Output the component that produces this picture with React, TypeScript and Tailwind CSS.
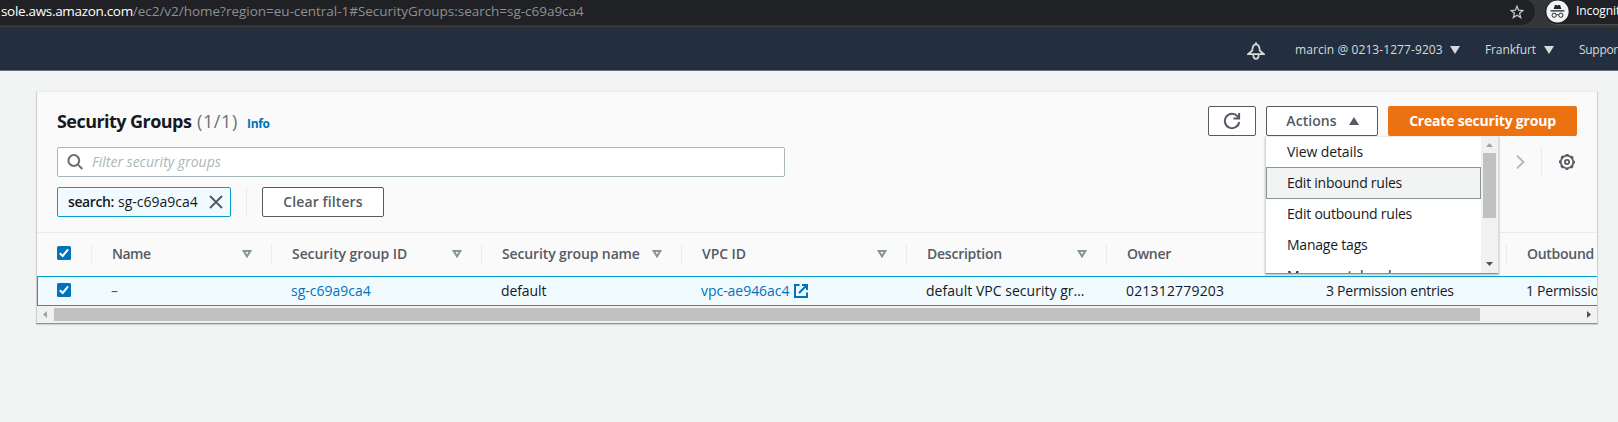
import type { ReactNode } from 'react';

function Triangle({ up = false, className = '' }: { up?: boolean; className?: string }) {
  return (
    <svg viewBox="0 0 10 8" className={`h-2 w-2.5 shrink-0 ${className}`} fill="currentColor">
      <path d={up ? 'M0 8 5 0l5 8z' : 'M0 0h10L5 8z'} />
    </svg>
  );
}

function SortIcon() {
  return (
    <svg viewBox="0 0 10 8" className="mr-[19px] h-2 w-2.5 shrink-0" fill="none" stroke="#879596" strokeWidth="2">
      <path d="M1.6 1h6.8L5 6.4z" />
    </svg>
  );
}

function Checkbox() {
  return (
    <svg viewBox="0 0 14 14" className="size-3.5 shrink-0">
      <rect width="14" height="14" rx="1.5" fill="#0073bb" />
      <path d="M2.8 7.3 5.7 10l5.4-6.7" fill="none" stroke="#fff" strokeWidth="2" />
    </svg>
  );
}

function BrowserBar() {
  return (
    <div className="flex h-[29px] border-b border-[#292b2e] bg-[#35363a] font-['Open_Sans',sans-serif]">
      <div className="flex h-[25px] w-[1535px] items-center rounded-br-[14px] rounded-tr-[10px] bg-[#202124] pb-[2px] pl-px">
        <span className="text-[13.5px] tracking-[-0.32px] text-white">sole.aws.amazon.com</span>
        <span className="text-[13.5px] tracking-[-0.025px] text-[#8d9094]">
          /ec2/v2/home?region=eu-central-1#SecurityGroups:search=sg-c69a9ca4
        </span>
        <svg viewBox="0 0 14 14" className="ml-auto mr-[11px] size-3.5" fill="none" stroke="#c4c7ca" strokeWidth="1.3">
          <path d="m7 1.2 1.6 4 4.3.3-3.3 2.8 1.1 4.2L7 10.2l-3.7 2.3 1.1-4.2L1.1 5.5l4.3-.3z" />
        </svg>
      </div>
      <div className="ml-[10px] flex h-[25px] flex-1 items-center overflow-hidden rounded-l-[12px] border-b border-[#4a4c50] bg-[#202124] pb-[2px]">
        <svg viewBox="0 0 24 24" className="ml-px size-[23px] shrink-0">
          <circle cx="12" cy="12" r="11.6" fill="#f1f3f4" />
          <path d="M8 9.5 9.3 5.2h1.2l1.5.5 1.5-.5h1.2L16 9.5zM4.8 10.7h14.4v1.2H4.8z" fill="#202124" />
          <g fill="none" stroke="#202124" strokeWidth="1">
            <circle cx="8.5" cy="15.9" r="2.2" />
            <circle cx="15.5" cy="15.9" r="2.2" />
            <path d="M10.7 15.6q1.3-.7 2.6 0" />
          </g>
        </svg>
        <span className="ml-[7px] whitespace-nowrap text-xs tracking-[-0.1px] text-white">Incognito</span>
      </div>
    </div>
  );
}

function NavBar() {
  return (
    <nav className="flex h-[42px] items-center overflow-hidden whitespace-nowrap border-b border-[#687078] bg-[#232f3e] pl-[1247px] text-xs font-medium text-[#d5dbdb]">
      <svg viewBox="0 0 18 18" className="mt-[3px] size-[18px] shrink-0" fill="none" stroke="currentColor" strokeWidth="1.8">
        <path d="M9 .3v2M5.6 6.2C6 3.7 7 2.4 9 2.4s3 1.3 3.4 3.8l.5 2.6 3.8 3.3H1.3l3.8-3.3zM6.3 12.5c0 5.8 5.4 5.8 5.4 0" />
      </svg>
      <span className="ml-[30px] w-[148px] shrink-0 tracking-[0.08px]">marcin @ 0213-1277-9203</span>
      <Triangle className="ml-[7px]" />
      <span className="ml-[25px] w-[52px] shrink-0 tracking-[-0.12px]">Frankfurt</span>
      <Triangle className="ml-[7px]" />
      <span className="ml-[25px] tracking-[-0.3px]">Support</span>
    </nav>
  );
}

const actionButton = 'flex h-[30px] items-center justify-center rounded-[2px] border border-[#545b64] bg-white font-semibold text-[#545b64]';

function ActionsMenu() {
  return (
    <div className="absolute -left-px top-[30px] z-10 flex h-[138px] w-[234px] overflow-hidden border border-t-[#eaeded] border-x-[#d5dbdb] border-b-[#879596] bg-white text-[#16191f] shadow-[0_1px_2px_rgba(0,28,36,0.3)]">
      <div className="min-w-0 flex-1 whitespace-nowrap">
        <div className="flex h-[30px] items-center pl-[21px] tracking-[-0.1px]">View details</div>
        <div className="flex h-8 items-center border border-[#879596] bg-[#f2f3f3] pl-5 tracking-[-0.24px]">Edit inbound rules</div>
        <div className="flex h-[30px] items-center pl-[21px] tracking-[-0.22px]">Edit outbound rules</div>
        <div className="flex h-8 items-center pl-[21px] tracking-[-0.22px]">Manage tags</div>
        <div className="flex h-[30px] items-center pl-[21px] tracking-[-0.24px]">Manage stale rules</div>
      </div>
      <div className="flex w-[17px] flex-col items-center bg-[#f1f1f1]">
        <svg viewBox="0 0 7 4" className="mt-[6px] h-1 w-[7px]" fill="#a3a3a3"><path d="M0 4 3.5 0 7 4z" /></svg>
        <div className="mt-[6px] h-[65px] w-[13px] bg-[#c1c1c1]" />
        <svg viewBox="0 0 7 4" className="mb-[7px] mt-auto h-1 w-[7px]" fill="#505050"><path d="M0 0h7L3.5 4z" /></svg>
      </div>
    </div>
  );
}

function Toolbar() {
  return (
    <div className="h-[141px] border-b border-[#eaeded] pl-5 pr-5 pt-[14px]">
      <div className="flex h-[30px] items-center">
        <h1 className="flex items-baseline text-lg text-[#16191f]">
          <span className="w-[140px] font-bold tracking-[-0.55px]">Security Groups</span>
          <span className="w-[50px] tracking-[0.6px] text-[#687078]">(1/1)</span>
          <span className="text-xs font-bold tracking-[-0.3px] text-[#0073bb]">Info</span>
        </h1>
        <div className="ml-auto flex gap-[10px]">
          <button className={`${actionButton} w-12`}>
            <svg viewBox="0 0 18 18" className="size-[18px]" fill="none" stroke="currentColor" strokeWidth="2">
              <path d="M16.2 10A7.2 7.2 0 1 1 14.6 4.3L16 5.8M16.1 1v5.5h-5.6" />
            </svg>
          </button>
          <div className="relative">
            <button className={`${actionButton} w-28 gap-3 pl-px tracking-[0.05px]`}>
              Actions
              <Triangle up />
            </button>
            <ActionsMenu />
          </div>
          <button className="flex h-[30px] w-[189px] items-center justify-center rounded-[2px] bg-[#ec7211] font-bold tracking-[-0.2px] text-white">
            Create security group
          </button>
        </div>
      </div>
      <div className="mt-[11px] flex h-[30px] items-center">
        <div className="flex h-[30px] w-[728px] items-center rounded-[2px] border border-[#aab7b8] bg-white pl-[10px]">
          <svg viewBox="0 0 16 16" className="-ml-px size-4" fill="none" stroke="#687078" strokeWidth="2">
            <circle cx="6.8" cy="6.5" r="5.4" />
            <path d="m10.7 10.4 4.6 4.6" />
          </svg>
          <span className="ml-[9px] italic tracking-[0.01px] text-[#aab7b8]">Filter security groups</span>
        </div>
        <svg viewBox="0 0 9 14" className="ml-auto h-3.5 w-[9px]" fill="none" stroke="#aab7b8" strokeWidth="1.8">
          <path d="m1 .7 6.5 6.3L1 13.3" />
        </svg>
        <span className="ml-4 h-[30px] w-px bg-[#eaeded]" />
        <svg viewBox="0 0 16 16" className="ml-[17px] mr-[2px] size-4" fill="none" stroke="#545b64">
          <circle cx="8" cy="8" r="6.3" strokeWidth="1.8" />
          <circle cx="8" cy="8" r="7.2" strokeWidth="1.6" strokeDasharray="2.828 2.827" strokeDashoffset="1.414" />
          <circle cx="8" cy="8" r="2.1" strokeWidth="1.8" />
        </svg>
      </div>
      <div className="mt-[10px] flex h-[30px] items-center">
        <div className="flex h-[30px] w-[174px] items-center rounded-[2px] border border-[#00a1c9] bg-[#f1faff] pl-[10px] text-[#16191f]">
          <span className="w-[50px] font-semibold tracking-[-0.39px]">search:</span>
          <span>sg-c69a9ca4</span>
          <svg viewBox="0 0 14 14" className="ml-auto mr-[7px] size-3.5" fill="none" stroke="#545b64" strokeWidth="1.9">
            <path d="m1 1 12 12M13 1 1 13" />
          </svg>
        </div>
        <span className="ml-[15px] h-[30px] w-px bg-[#eaeded]" />
        <button className={`${actionButton} ml-[15px] w-[122px] tracking-[0.1px]`}>Clear filters</button>
      </div>
    </div>
  );
}

function HeaderCell({ width, sort = true, children }: { width: string; sort?: boolean; children?: ReactNode }) {
  return (
    <div className={`flex h-[21px] shrink-0 items-center justify-between border-l border-[#eaeded] pb-px pl-5 ${width}`}>
      {children}
      {sort && <SortIcon />}
    </div>
  );
}

function SecurityGroupTable() {
  return (
    <div className="overflow-hidden whitespace-nowrap">
      <div className="flex h-[43px] items-center font-semibold text-[#545b64]">
        <div className="mb-[3px] w-[54px] shrink-0 pl-5"><Checkbox /></div>
        <HeaderCell width="w-[180px]"><span className="tracking-[-0.5px]">Name</span></HeaderCell>
        <HeaderCell width="w-[210px]"><span className="tracking-[-0.07px]">Security group ID</span></HeaderCell>
        <HeaderCell width="w-[200px]"><span className="tracking-[-0.13px]">Security group name</span></HeaderCell>
        <HeaderCell width="w-[225px]"><span className="tracking-[-0.06px]">VPC ID</span></HeaderCell>
        <HeaderCell width="w-[200px]"><span className="tracking-[-0.24px]">Description</span></HeaderCell>
        <HeaderCell width="w-[200px]" sort={false}><span className="tracking-[-0.29px]">Owner</span></HeaderCell>
        <HeaderCell width="w-[200px]" sort={false} />
        <HeaderCell width="w-[220px]" sort={false}><span className="tracking-[-0.28px]">Outbound rules count</span></HeaderCell>
      </div>
      <div className="flex h-[30px] items-center overflow-hidden border-y border-l border-[#00a1c9] bg-[#f1faff] text-[#16191f]">
        <div className="mb-[2px] w-[73px] shrink-0 pl-[19px]"><Checkbox /></div>
        <div className="w-[180px] shrink-0 text-[#545b64]">–</div>
        <div className="w-[210px] shrink-0 text-[#0073bb]">sg-c69a9ca4</div>
        <div className="w-[200px] shrink-0 tracking-[-0.1px]">default</div>
        <div className="flex w-[225px] shrink-0 items-center text-[#0073bb]">
          <span className="w-[93px] tracking-[-0.04px]">vpc-ae946ac4</span>
          <svg viewBox="0 0 14 14" className="size-3.5" fill="none" stroke="currentColor" strokeWidth="2">
            <path d="M5.5 1H1v12h12V8.5M8 1h5v5M12.5 1.5 5 9" />
          </svg>
        </div>
        <div className="w-[200px] shrink-0 tracking-[0.03px]">default VPC security gr…</div>
        <div className="w-[200px] shrink-0 tracking-[0.18px]">021312779203</div>
        <div className="w-[200px] shrink-0 tracking-[-0.26px]">3 Permission entries</div>
        <div className="w-[200px] shrink-0 tracking-[-0.26px]">1 Permission entry</div>
      </div>
      <div className="flex h-[17px] items-center bg-[#f1f1f1] pl-[6px] pr-[6px]">
        <svg viewBox="0 0 4 7" className="h-[7px] w-1" fill="#a3a3a3"><path d="M4 0v7L0 3.5z" /></svg>
        <div className="ml-[7px] h-[13px] w-[1426px] bg-[#c1c1c1]" />
        <svg viewBox="0 0 4 7" className="ml-auto h-[7px] w-1" fill="#505050"><path d="M0 0v7l4-3.5z" /></svg>
      </div>
    </div>
  );
}

export default function App() {
  return (
    <div className="h-[422px] overflow-hidden bg-[#f2f3f3] font-['Open_Sans','Noto_Sans',sans-serif] text-sm">
      <BrowserBar />
      <NavBar />
      <main className="ml-9 mt-5 w-[1562px] border border-x-[#ccd1d1] border-b-[#879596] border-t-[#eaeded] bg-[#fafafa] shadow-[0_1px_1px_rgba(0,28,36,0.15)]">
        <Toolbar />
        <SecurityGroupTable />
      </main>
    </div>
  );
}
